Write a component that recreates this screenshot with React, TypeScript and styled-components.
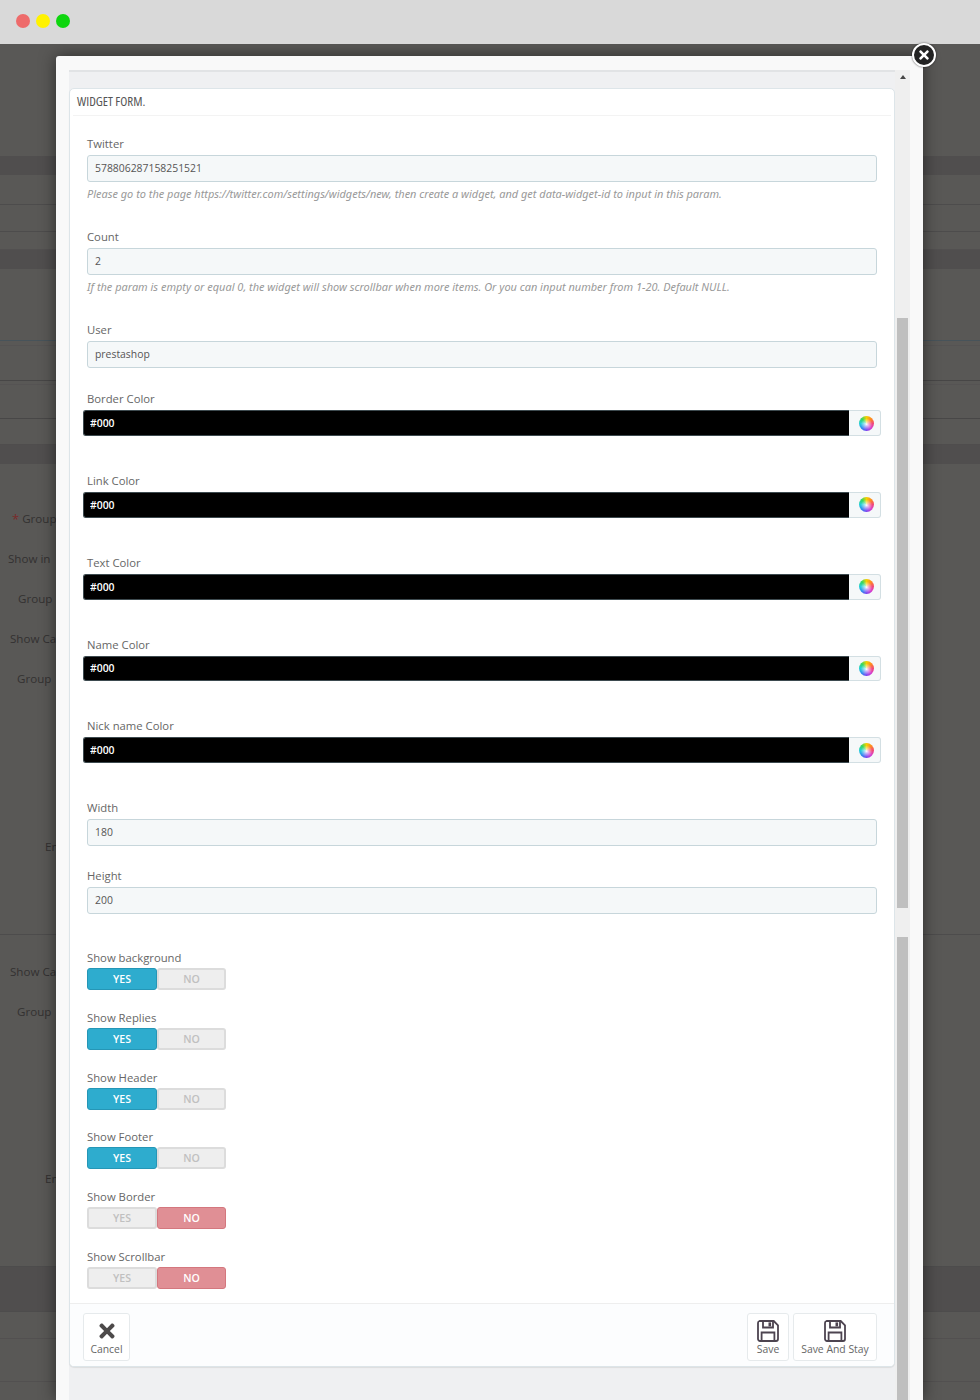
import styled, { createGlobalStyle } from 'styled-components';
import { FaTimes } from 'react-icons/fa';

const GlobalStyle = createGlobalStyle`
  html, body {
    margin: 0;
    padding: 0;
    background: #595856;
    font-family: 'Open Sans', 'Liberation Sans', sans-serif;
  }
  * {
    box-sizing: border-box;
  }
`;

const Page = styled.div`
  position: relative;
  display: flex;
  flex-direction: column;
  width: 980px;
  height: 1400px;
  overflow: hidden;
`;

const TopBar = styled.div`
  display: flex;
  align-items: center;
  gap: 6px;
  flex: none;
  height: 44px;
  padding: 0 0 2px 16px;
  background: #d9d9d9;
`;

const Dot = styled.span<{ $color: string }>`
  width: 14px;
  height: 14px;
  border-radius: 50%;
  background: ${p => p.$color};
`;

const Backdrop = styled.div`
  position: relative;
  flex: 1;
  overflow: hidden;
  background: #595856;
`;

const BackRow = styled.div<{ $h: number; $dark?: boolean; $line?: string; $indent?: number }>`
  display: flex;
  align-items: center;
  height: ${p => p.$h}px;
  padding-left: ${p => p.$indent || 0}px;
  background: ${p => (p.$dark ? '#504e4e' : 'transparent')};
  border-bottom: 1px solid ${p => p.$line || 'transparent'};
  color: #333131;
  font-size: 11.6px;
  white-space: nowrap;
  i {
    margin-right: 3px;
    color: #7a2a2a;
    font-size: 13px;
    font-style: normal;
  }
`;

const Modal = styled.div`
  position: absolute;
  top: 12px;
  left: 56px;
  bottom: 0;
  display: flex;
  width: 867px;
  padding: 14px 13px 0;
  background: #f9f9f9;
  border-radius: 3px 3px 0 0;
  box-shadow: 0 0 16px rgba(0, 0, 0, 0.5);
`;

const CloseButton = styled.div`
  position: absolute;
  top: 43px;
  left: 912px;
  display: flex;
  align-items: center;
  justify-content: center;
  width: 24px;
  height: 24px;
  border: 2px solid #fff;
  border-radius: 50%;
  background: #222;
  color: #fff;
  font-size: 14px;
  box-shadow: 0 0 2px rgba(0, 0, 0, 0.7);
`;

const Content = styled.div`
  flex: none;
  width: 826px;
  padding-top: 16px;
  background: #eff0f2;
  border-top: 2px solid #e1e3e5;
`;

const Track = styled.div`
  display: flex;
  flex-direction: column;
  flex: none;
  width: 15px;
  padding: 0 2px;
  background: #efefef;
`;

const UpArrow = styled.div`
  align-self: center;
  width: 0;
  height: 0;
  margin-top: 5px;
  border-left: 3.5px solid transparent;
  border-right: 3.5px solid transparent;
  border-bottom: 4px solid #444;
`;

const Thumb = styled.div<{ $top: number; $h?: number }>`
  flex: ${p => (p.$h ? 'none' : 1)};
  height: ${p => (p.$h ? `${p.$h}px` : 'auto')};
  margin-top: ${p => p.$top}px;
  background: #bfbfbf;
`;

const Panel = styled.div`
  background: #fff;
  border: 1px solid #dde5e9;
  border-radius: 5px;
  box-shadow: 0 1px 1px rgba(0, 0, 0, 0.08);
  overflow: hidden;
`;

const PanelHeading = styled.div`
  display: flex;
  align-items: center;
  height: 27px;
  margin: 0 3px;
  padding: 0 4px 2px;
  border-bottom: 1px solid #f3f3f3;
  color: #555;
  font-family: 'Open Sans', 'Liberation Sans', sans-serif;
  font-size: 13px;
  font-stretch: 75%;
`;

const PanelBody = styled.div`
  padding: 19px 17px 0;
`;

const Field = styled.div<{ $gap: number }>`
  margin-bottom: ${p => p.$gap}px;
  &:last-child {
    margin-bottom: 14px;
  }
`;

const Label = styled.label`
  display: block;
  height: 20px;
  color: #666;
  font-size: 11.3px;
  line-height: 18px;
`;

const ToggleLabel = styled(Label)`
  height: 19px;
`;

const TextInput = styled.input`
  display: block;
  width: 100%;
  height: 27px;
  padding: 0 7px 1px;
  background: #f5f8f9;
  border: 1px solid #c7d6db;
  border-radius: 3px;
  outline: none;
  color: #555;
  font-family: inherit;
  font-size: 10.4px;
`;

const Hint = styled.p`
  height: 20px;
  margin: 0;
  padding-top: 5px;
  color: #999;
  font-family: 'Noto Sans', 'Open Sans', sans-serif;
  font-size: 10.96px;
  font-style: italic;
  line-height: 13px;
  white-space: nowrap;
`;

const ColorRow = styled.div`
  display: flex;
  height: 25.75px;
  margin: 0 -4px;
`;

const ColorInput = styled.input`
  flex: 1;
  min-width: 0;
  padding: 0 6px;
  background: #000;
  border: 1px solid #3d4a4f;
  border-right: none;
  border-radius: 3px 0 0 3px;
  outline: none;
  color: #fff;
  font-family: inherit;
  font-size: 10.4px;
  font-weight: 600;
`;

const ColorAddon = styled.div`
  display: flex;
  align-items: center;
  justify-content: center;
  flex: none;
  width: 32px;
  padding-left: 3px;
  background: #f5f8f9;
  border: 1px solid #d3dfe3;
  border-left: none;
  border-radius: 0 3px 3px 0;
`;

const Wheel = styled.span`
  width: 15px;
  height: 15px;
  border-radius: 50%;
  background:
    radial-gradient(circle at 50% 55%, #fff 0, rgba(255, 255, 255, 0.6) 18%, rgba(255, 255, 255, 0) 52%),
    conic-gradient(#f5d000, #ff8a1e, #f24878, #d63fd0, #7a44f0, #2f8cf0, #22cfd8, #35d860, #f5d000);
`;

const Toggle = styled.div`
  display: grid;
  grid-template-columns: 70px 69px;
  height: 22px;
`;

const ToggleSide = styled.div<{ $tone: 'yes' | 'no' | 'off' }>`
  display: flex;
  align-items: center;
  justify-content: center;
  border: 1px solid ${p => (p.$tone === 'yes' ? '#2596b6' : p.$tone === 'no' ? '#d4777e' : '#dcdcdc')};
  border-width: ${p => (p.$tone === 'off' ? '2px' : '1px')};
  border-radius: 3px;
  background: ${p => (p.$tone === 'yes' ? '#2eacce' : p.$tone === 'no' ? '#e08f95' : '#eeeeee')};
  color: ${p => (p.$tone === 'off' ? '#c0c0c0' : '#fff')};
  font-size: 10.6px;
  font-weight: 600;
`;

const PanelFooter = styled.div`
  display: flex;
  justify-content: space-between;
  height: 63px;
  padding: 9px 17px 0 13px;
  background: #fcfdfe;
  border-top: 1px solid #eeeeee;
`;

const ButtonGroup = styled.div`
  display: flex;
  gap: 4px;
`;

const ActionButton = styled.div<{ $w: number }>`
  display: flex;
  flex-direction: column;
  align-items: center;
  width: ${p => p.$w}px;
  height: 48px;
  padding-top: 5px;
  background: #fff;
  border: 1px solid #e6eaec;
  border-radius: 3px;
  color: #666;
  font-size: 10.4px;
  line-height: 13px;
  white-space: nowrap;
`;

const IconSlot = styled.div`
  display: flex;
  align-items: center;
  justify-content: center;
  height: 24px;
  color: #4d4a4a;
`;

const SaveIcon = () => (
  <svg width="22" height="22" viewBox="0 0 22 22" fill="none">
    <path
      d="M2.5 1h14.2L21 5.3V19a2 2 0 0 1-2 2H3a2 2 0 0 1-2-2V3a2 2 0 0 1 1.5-2z"
      stroke="#4d4450"
      strokeWidth="1.8"
    />
    <path d="M6 1.5v6h10v-6" stroke="#4d4450" strokeWidth="1.8" />
    <rect x="11.5" y="2.4" width="2.6" height="4" fill="#4d4450" />
    <path d="M4.6 20.5v-8h12.8v8" stroke="#4d4450" strokeWidth="1.8" />
  </svg>
);

const backRows = [
  { h: 112 },
  { h: 19, dark: true },
  { h: 30, line: '#4d4c4c' },
  { h: 27, line: '#4d4c4c' },
  { h: 18, line: '#525050' },
  { h: 19, dark: true },
  { h: 72, line: '#47535a' },
  { h: 5, line: '#555353' },
  { h: 35, line: '#474646' },
  { h: 4, line: '#555353' },
  { h: 34, line: '#484747' },
  { h: 26, line: '#4f4d4d' },
  { h: 19, dark: true },
  { h: 35 },
  { h: 40, text: 'Group', star: true, indent: 12 },
  { h: 40, text: 'Show in', indent: 8 },
  { h: 40, text: 'Group', indent: 18 },
  { h: 40, text: 'Show Ca', indent: 10 },
  { h: 40, text: 'Group', indent: 17 },
  { h: 128 },
  { h: 40, text: 'En', indent: 45 },
  { h: 68, line: '#4d4c4c' },
  { h: 17 },
  { h: 40, text: 'Show Ca', indent: 10 },
  { h: 40, text: 'Group', indent: 17 },
  { h: 127 },
  { h: 40, text: 'En', indent: 45 },
  { h: 68, line: '#4d4c4c' },
  { h: 45, dark: true, line: '#4d4c4c' },
  { h: 27, line: '#525050' },
  { h: 43, line: '#525050' },
];

const textFields = [
  {
    label: 'Twitter',
    value: '578806287158251521',
    hint: 'Please go to the page https://twitter.com/settings/widgets/new, then create a widget, and get data-widget-id to input in this param.',
    gap: 26,
  },
  {
    label: 'Count',
    value: '2',
    hint: 'If the param is empty or equal 0, the widget will show scrollbar when more items. Or you can input number from 1-20. Default NULL.',
    gap: 26,
  },
  { label: 'User', value: 'prestashop', gap: 22.25 },
];

const colorFields = ['Border Color', 'Link Color', 'Text Color', 'Name Color', 'Nick name Color'];

const switches = [
  { label: 'Show background', on: true },
  { label: 'Show Replies', on: true },
  { label: 'Show Header', on: true },
  { label: 'Show Footer', on: true },
  { label: 'Show Border', on: false },
  { label: 'Show Scrollbar', on: false },
];

export default function App() {
  return (
    <>
      <GlobalStyle />
      <Page>
        <TopBar>
          <Dot $color="#ee6b6b" />
          <Dot $color="#fff200" />
          <Dot $color="#0fd60f" />
        </TopBar>
        <Backdrop>
          {backRows.map((row, i) => (
            <BackRow key={i} $h={row.h} $dark={row.dark} $line={row.line} $indent={row.indent}>
              {row.star && <i>*</i>}
              {row.text}
            </BackRow>
          ))}
          <Modal>
            <Content>
              <Panel>
                <PanelHeading>WIDGET FORM.</PanelHeading>
                <PanelBody>
                  {textFields.map(f => (
                    <Field key={f.label} $gap={f.gap}>
                      <Label>{f.label}</Label>
                      <TextInput readOnly value={f.value} />
                      {f.hint && <Hint>{f.hint}</Hint>}
                    </Field>
                  ))}
                  {colorFields.map(name => (
                    <Field key={name} $gap={36}>
                      <Label>{name}</Label>
                      <ColorRow>
                        <ColorInput readOnly value="#000" />
                        <ColorAddon>
                          <Wheel />
                        </ColorAddon>
                      </ColorRow>
                    </Field>
                  ))}
                  <Field $gap={20.75}>
                    <Label>Width</Label>
                    <TextInput readOnly value="180" />
                  </Field>
                  <Field $gap={35}>
                    <Label>Height</Label>
                    <TextInput readOnly value="200" />
                  </Field>
                  {switches.map(s => (
                    <Field key={s.label} $gap={18.9}>
                      <ToggleLabel as="div">{s.label}</ToggleLabel>
                      <Toggle>
                        <ToggleSide $tone={s.on ? 'yes' : 'off'}>YES</ToggleSide>
                        <ToggleSide $tone={s.on ? 'off' : 'no'}>NO</ToggleSide>
                      </Toggle>
                    </Field>
                  ))}
                </PanelBody>
                <PanelFooter>
                  <ActionButton $w={47}>
                    <IconSlot>
                      <FaTimes size={22} />
                    </IconSlot>
                    Cancel
                  </ActionButton>
                  <ButtonGroup>
                    <ActionButton $w={42}>
                      <IconSlot>
                        <SaveIcon />
                      </IconSlot>
                      Save
                    </ActionButton>
                    <ActionButton $w={84}>
                      <IconSlot>
                        <SaveIcon />
                      </IconSlot>
                      Save And Stay
                    </ActionButton>
                  </ButtonGroup>
                </PanelFooter>
              </Panel>
            </Content>
            <Track>
              <UpArrow />
              <Thumb $top={239} $h={590} />
              <Thumb $top={29} />
            </Track>
          </Modal>
        </Backdrop>
        <CloseButton>
          <FaTimes />
        </CloseButton>
      </Page>
    </>
  );
}
